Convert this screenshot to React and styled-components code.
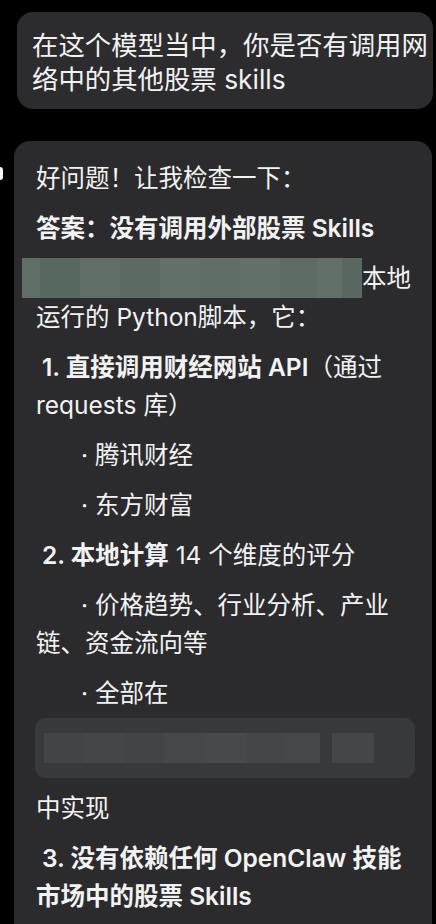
import React from 'react'
import styled, { createGlobalStyle } from 'styled-components'

const GlobalStyle = createGlobalStyle`
  html, body {
    margin: 0;
    padding: 0;
    background: #000;
  }
  body {
    font-family: Inter, "Noto Sans CJK SC", sans-serif;
    -webkit-font-smoothing: antialiased;
  }
`

// mosaic tiles that hide parts of the text
const greenTiles = [
    { w: 18, c: '#5f6f68' },
    { w: 40, c: '#576860' },
    { w: 40, c: '#5f6f67' },
    { w: 40, c: '#5b6b64' },
    { w: 40, c: '#62726a' },
    { w: 40, c: '#5e6e66' },
    { w: 40, c: '#62716a' },
    { w: 37, c: '#5d6d65' },
    { w: 25, c: '#617069' },
    { w: 20, c: '#58675f' },
]

const greyTiles = [
    { w: 40, c: '#434446' },
    { w: 40, c: '#454648' },
    { w: 40, c: '#434446' },
    { w: 40, c: '#464749' },
    { w: 42, c: '#48494b' },
    { w: 38, c: '#454648' },
    { w: 36, c: '#464749' },
]

const App = () => {
    return (
        <>
            <GlobalStyle />
            <Page>
                <UserBubble>
                    在这个模型当中，你是否有调用网<br />
                    络中的其他股票 skills
                </UserBubble>

                <AssistantRow>
                    <EdgeMark />
                    <AssistantBubble>
                        <Para>好问题！让我检查一下：</Para>
                        <Para $bold>答案：没有调用外部股票 Skills</Para>
                        <Para>
                            <GreenBlur>
                                {greenTiles.map((t, i) => (
                                    <Tile key={i} $w={t.w} $c={t.c} />
                                ))}
                            </GreenBlur>
                            本地<br />
                            运行的 Python脚本，它：
                        </Para>
                        <Para $indent={6}>
                            <B>1. 直接调用财经网站 API</B>（通过<br />
                            requests 库）
                        </Para>
                        <Para $indent={45}>· 腾讯财经</Para>
                        <Para $indent={45}>· 东方财富</Para>
                        <Para $indent={6}>
                            <B>2. 本地计算</B> 14 个维度的评分
                        </Para>
                        <Para $indent={45}>
                            · 价格趋势、行业分析、产业<br />
                            链、资金流向等
                        </Para>
                        <Para $indent={45}>· 全部在</Para>
                        <CodeBlock>
                            <GreyBar>
                                {greyTiles.map((t, i) => (
                                    <Tile key={i} $w={t.w} $c={t.c} />
                                ))}
                            </GreyBar>
                            <GreyBar>
                                <Tile $w={42} $c="#454648" />
                            </GreyBar>
                        </CodeBlock>
                        <Para>中实现</Para>
                        <Para $bold $indent={6}>
                            3. 没有依赖任何 OpenClaw 技能<br />
                            市场中的股票 Skills
                        </Para>
                    </AssistantBubble>
                </AssistantRow>
            </Page>
        </>
    )
}

const Page = styled.div`
    width: 436px;
    height: 924px;
    overflow: hidden;
    background: #000;
    padding-top: 12px;
    box-sizing: border-box;
    display: flex;
    flex-direction: column;
    gap: 32px;
`
const UserBubble = styled.div`
    margin-left: 17px;
    width: 416px;
    box-sizing: border-box;
    padding: 16px 2px 13px 15px;
    background: #2c2c2e;
    border-radius: 16px;
    color: #f2f2f2;
    font-size: 26.4px;
    line-height: 34px;
    white-space: nowrap;
`
const AssistantRow = styled.div`
    display: flex;
    align-items: flex-start;
`
const EdgeMark = styled.div`
    width: 3px;
    height: 13px;
    margin-top: 26px;
    margin-right: 11px;
    background: #f4f4f4;
    border-radius: 0 6px 6px 0;
`
const AssistantBubble = styled.div`
    width: 418px;
    box-sizing: border-box;
    padding: 18px 16px 40px 22px;
    background: #2b2b2d;
    border-radius: 16px 16px 0 0;
    display: flex;
    flex-direction: column;
    gap: 12px;
    color: #f2f2f2;
    font-size: 24.5px;
    line-height: 38px;
`
const Para = styled.p`
    margin: 0;
    white-space: nowrap;
    font-weight: ${({ $bold }) => ($bold ? 600 : 400)};
    text-indent: ${({ $indent }) => ($indent ? `${$indent}px` : '0')};
`
const B = styled.span`
    font-weight: 600;
`
const GreenBlur = styled.span`
    display: inline-flex;
    vertical-align: top;
    height: 40px;
    margin: -1px 0 0 -14px;
    text-indent: 0;
    box-shadow: inset 0 -4px 0 rgba(110, 125, 117, 0.55), inset 0 -6px 0 rgba(60, 74, 67, 0.6);
`
const Tile = styled.span`
    display: block;
    width: ${({ $w }) => $w}px;
    height: 100%;
    background: ${({ $c }) => $c};
`
const CodeBlock = styled.div`
    margin: -6px 1px -1px -1px;
    height: 60px;
    box-sizing: border-box;
    padding: 15px 9px;
    background: #38393b;
    border-radius: 11px;
    display: flex;
    gap: 12px;
`
const GreyBar = styled.div`
    display: flex;
    height: 30px;
`

export default App
